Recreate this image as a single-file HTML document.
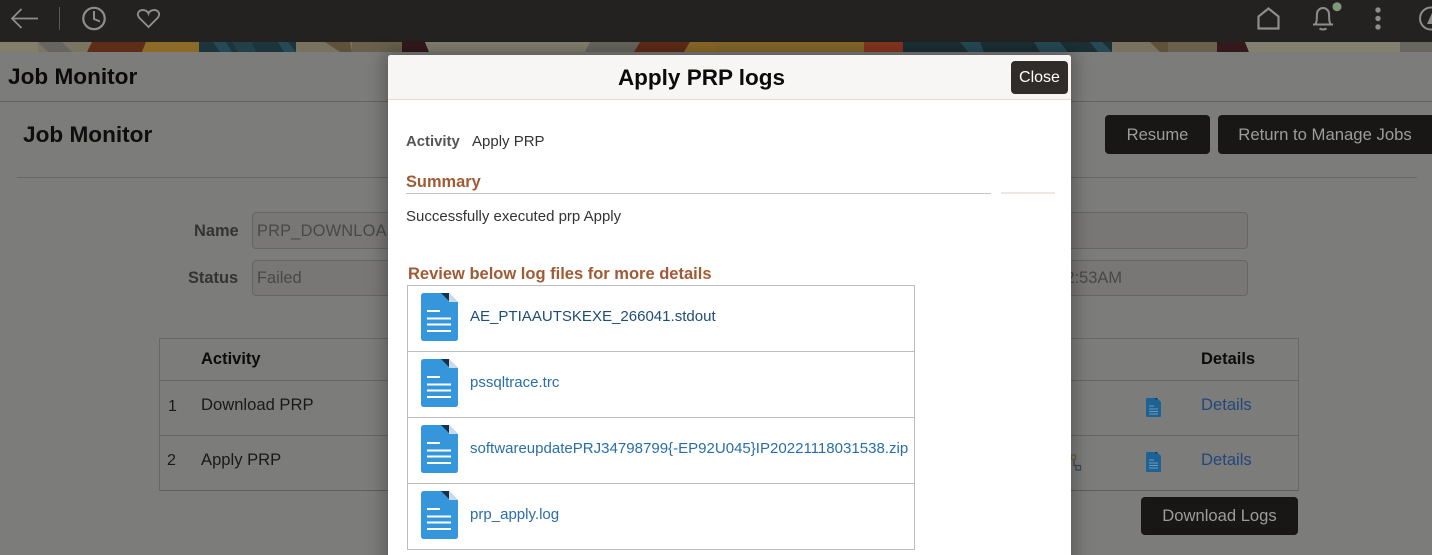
<!DOCTYPE html>
<html lang="en"><head><meta charset="utf-8"><title>Apply PRP logs</title>
<style>
html,body{margin:0;padding:0;width:1432px;height:555px;overflow:hidden;background:#7b7b7a;font-family:"Liberation Sans",sans-serif;}
#w{position:relative;width:1432px;height:555px;overflow:hidden;}
.a{position:absolute;white-space:nowrap;}
.btn{position:absolute;background:#181716;color:#9d9c9a;border-radius:4px;font-size:16.6px;text-align:center;box-sizing:border-box;}
.inp{position:absolute;box-sizing:border-box;border:1px solid #686664;border-radius:4px;background:#787776;color:#484848;font-size:16.4px;padding-left:4px;overflow:hidden;white-space:nowrap;}
.line{position:absolute;height:1px;background:#666;}
.row{position:absolute;left:407px;width:508px;height:66px;box-sizing:border-box;border:1px solid #bdbdbd;border-top:0;}
.row a{position:absolute;left:62px;top:21px;font-size:15.04px;color:#2a6ea9;white-space:nowrap;line-height:20px;}
.row svg{position:absolute;left:13px;top:7px;}
</style></head><body><div id="w">
<div class="a" style="left:0;top:0;width:1432px;height:42px;background:#232220;"></div>
<svg class="a" style="left:0;top:42px" width="1432" height="10" viewBox="0 0 1432 10">
<rect width="1432" height="10" fill="#7a7463"/>
<rect x="0" width="38" height="10" fill="#837d6b"/><polygon points="38,0 62,0 72,10 48,10" fill="#66655f"/><rect x="72" width="16" height="10" fill="#7a7463"/>
<polygon points="92,0 146,0 142,10 87,10" fill="#5f2c17"/><polygon points="146,0 199,0 199,10 142,10" fill="#8c6a28"/>
<rect x="199" width="97" height="10" fill="#1c343b"/><polygon points="213,0 226,0 232,10 220,10" fill="#264a55"/><polygon points="232,0 252,0 256,10 238,10" fill="#234049"/><polygon points="278,0 288,0 296,10 284,10" fill="#264a55"/>
<polygon points="296,0 325,0 340,10 300,10" fill="#7a7261"/><polygon points="325,0 350,0 352,10 340,10" fill="#5e523b"/>
<rect x="352" width="50" height="10" fill="#6a614d"/><polygon points="402,0 425,0 429,10 402,10" fill="#33191c"/>
<polygon points="425,0 590,0 585,10 429,10" fill="#84806f"/><polygon points="590,0 640,0 634,10 585,10" fill="#68675f"/>
<polygon points="640,0 690,0 684,10 634,10" fill="#5f2c17"/><polygon points="690,0 716,0 716,10 684,10" fill="#8c6a28"/>
<rect x="716" width="148" height="10" fill="#86682b"/><rect x="864" width="39" height="10" fill="#86351f"/><rect x="903" width="209" height="10" fill="#1b2f35"/>
<polygon points="960,0 980,0 984,10 968,10" fill="#264a55"/><polygon points="1034,0 1060,0 1068,10 1040,10" fill="#264a55"/><polygon points="1090,0 1102,0 1112,10 1098,10" fill="#264a55"/>
<polygon points="1112,0 1150,0 1168,10 1116,10" fill="#7a7261"/><polygon points="1150,0 1168,0 1172,10 1160,10" fill="#5e523b"/>
<rect x="1168" width="50" height="10" fill="#6a614d"/><polygon points="1217,0 1245,0 1249,10 1217,10" fill="#33191c"/>
<polygon points="1245,0 1400,0 1400,10 1249,10" fill="#84806f"/><rect x="1400" width="32" height="10" fill="#68675f"/>
</svg>
<div class="a" style="left:0;top:52px;width:1432px;height:503px;background:#7c7c7b;"></div>

<!-- top bar icons -->
<svg class="a" style="left:0;top:0" width="180" height="42" fill="none" stroke="#8e8d8b">
<path d="M38 18.500H12M21.500 9L12 18.500L21.500 28" stroke-width="1.800"/>
<path d="M59.500 7V30" stroke="#5a5957" stroke-width="1"/>
<circle cx="94" cy="18.500" r="10.700" stroke-width="2.200"/><path d="M94 11V19L100 21.500" stroke-width="2"/>
<path d="M148.500 27L139 17.500C136 13 139.500 10 143 10C146 10 148 12 148.500 13.500C149 12 151 10 154 10C157.500 10 161 13 158 17.500Z" stroke-width="1.900"/>
</svg>
<svg class="a" style="left:1240px;top:0" width="192" height="42" fill="none" stroke="#8e8d8b">
<path d="M18.500 28.500V16.500L28.500 8.500L38.500 16.500V28.500Z" stroke-width="2.200"/>
<path d="M73 24.500H93M75.500 24C77.500 21 76.500 17.500 77 14A6 6 0 0 1 89 14C89.500 17.500 88.500 21 90.500 24" stroke-width="2"/><path d="M79.500 28.500Q83 30.500 86.500 28.500" stroke-width="2"/>
<circle cx="97" cy="6.700" r="4.500" fill="#7f9a78" stroke="none"/>
<circle cx="138" cy="10" r="2.700" fill="#8e8d8b" stroke="none"/><circle cx="138" cy="18.500" r="2.700" fill="#8e8d8b" stroke="none"/><circle cx="138" cy="27" r="2.700" fill="#8e8d8b" stroke="none"/>
<circle cx="191" cy="18.500" r="11" stroke-width="2"/><path d="M187 24L192 13V24Z" fill="#8e8d8b" stroke="none"/>
</svg>

<!-- background page -->
<div class="a" style="left:8px;top:64px;font-size:22.6px;font-weight:bold;color:#0c0a0a;line-height:25px;">Job Monitor</div>
<div class="line" style="left:0;top:101px;width:1432px;background:#636362;"></div>
<div class="a" style="left:23px;top:121px;font-size:22.6px;font-weight:bold;color:#0e0e0e;line-height:28px;">Job Monitor</div>
<div class="line" style="left:17px;top:177px;width:1400px;background:#666;"></div>
<div class="btn" style="left:1105px;top:115px;width:105px;height:39px;line-height:40px;">Resume</div>
<div class="btn" style="left:1218px;top:115px;width:214px;height:39px;line-height:40px;border-radius:4px 0 0 4px;font-size:16.7px;">Return to Manage Jobs</div>
<div class="a" style="left:194px;top:222px;font-size:16.4px;font-weight:bold;color:#333;line-height:18px;">Name</div>
<div class="a" style="left:188px;top:269px;font-size:16.4px;font-weight:bold;color:#333;line-height:18px;">Status</div>
<div class="inp" style="left:252px;top:212px;width:996px;height:37px;line-height:36px;"><span style="letter-spacing:.2px">PRP_DOWNLOAD</span></div>
<div class="inp" style="left:252px;top:260px;width:996px;height:36px;line-height:35px;">Failed<span style="position:absolute;right:125px;top:0">11/18/2022 12:53AM</span></div>

<div class="a" style="left:159px;top:338px;width:1140px;height:153px;box-sizing:border-box;border:1px solid #686868;border-bottom:1px solid #5f5d58;"></div>
<div class="line" style="left:160px;top:380px;width:1138px;"></div>
<div class="line" style="left:160px;top:435px;width:1138px;"></div>
<div class="a" style="left:201px;top:350px;font-size:16.5px;font-weight:bold;color:#0c0c0c;line-height:18px;">Activity</div>
<div class="a" style="left:1201px;top:350px;font-size:16.5px;font-weight:bold;color:#0c0c0c;line-height:18px;">Details</div>
<div class="a" style="left:168px;top:398px;font-size:16px;color:#191919;line-height:18px;">1</div>
<div class="a" style="left:201px;top:396px;font-size:16.6px;color:#191919;line-height:18px;">Download PRP</div>
<div class="a" style="left:167px;top:452px;font-size:16px;color:#191919;line-height:18px;">2</div>
<div class="a" style="left:201px;top:451px;font-size:16.6px;color:#191919;line-height:18px;">Apply PRP</div>
<div class="a" style="left:1201px;top:396px;font-size:16.6px;color:#22477a;line-height:18px;">Details</div>
<div class="a" style="left:1201px;top:451px;font-size:16.6px;color:#22477a;line-height:18px;">Details</div>
<svg class="a" style="left:1146px;top:398px" width="15" height="19"><path d="M1 0H11L15 4V18Q15 19 14 19H1Q0 19 0 18V1Q0 0 1 0Z" fill="#1e6295"/><path d="M9 0H11V2Z" fill="#10263a"/><path d="M3 8H8M3 11H12M3 13.500H12M3 16H12" stroke="#6d99ba" stroke-width="1"/></svg>
<svg class="a" style="left:1146px;top:452px" width="15" height="20"><path d="M1 0H11L15 4V19Q15 20 14 20H1Q0 20 0 19V1Q0 0 1 0Z" fill="#1e6295"/><path d="M9 0H11V2Z" fill="#10263a"/><path d="M3 8H8M3 11H12M3 13.500H12M3 16H12" stroke="#6d99ba" stroke-width="1"/></svg>
<svg class="a" style="left:1071px;top:453px" width="12" height="18" fill="none" stroke="#4a4a48" stroke-width="1.300"><rect x="0.500" y="2" width="4" height="4.500" stroke="#6a6040"/><path d="M3 6.500V12.500H5"/><rect x="5" y="12.500" width="4.500" height="4.500" stroke="#3c4a58"/></svg>
<div class="btn" style="left:1141px;top:497px;width:157px;height:38px;line-height:38px;">Download Logs</div>

<!-- modal shadow -->
<div class="a" style="left:388px;top:55px;width:683px;height:520px;box-shadow:0 0 16px 4px rgba(0,0,0,.28);"></div>
<!-- modal -->
<div class="a" style="left:388px;top:55px;width:683px;height:500px;background:#fff;border-radius:3px 3px 0 0;overflow:hidden;">
  <div style="position:absolute;left:0;top:0;width:683px;height:44px;background:#f8f6f4;border-bottom:1px solid #dfdcd9;"></div>
  <div class="a" style="left:0;width:627px;text-align:center;top:9px;font-size:22.5px;font-weight:bold;color:#0b0b0b;line-height:27px;">Apply PRP logs</div>
  <div class="a" style="left:623px;top:6px;width:57px;height:33px;background:#302c29;color:#fff;border-radius:4px;font-size:16px;line-height:34px;text-align:center;">Close</div>
  <div class="a" style="left:18px;top:78px;font-size:14.9px;font-weight:bold;color:#555;line-height:18px;">Activity</div>
  <div class="a" style="left:84px;top:78px;font-size:15px;color:#333;line-height:18px;">Apply PRP</div>
  <div class="a" style="left:18px;top:118px;font-size:16.4px;font-weight:bold;color:#a25a34;line-height:18px;">Summary</div>
  <div class="a" style="left:18px;top:138px;width:585px;height:1px;background:#c4c4c4;"></div>
  <div class="a" style="left:613px;top:137px;width:54px;height:2px;background:#ece9e5;"></div>
  <div class="a" style="left:18px;top:153px;font-size:15px;color:#333;line-height:18px;">Successfully executed prp Apply</div>
  <div class="a" style="left:20px;top:210px;font-size:16.5px;font-weight:bold;color:#a25a34;line-height:18px;">Review below log files for more details</div>
</div>
<div class="a" style="left:407px;top:285px;width:508px;height:1px;background:#bdbdbd;"></div>
<div class="row" style="top:286px;"><svg width="37" height="48" viewBox="0 0 37 48"><path d="M3 0H28L37 9V45Q37 48 34 48H3Q0 48 0 45V3Q0 0 3 0Z" fill="#3596db"/><path d="M28 0L37 9H28Z" fill="#c9d9e6"/><path d="M20 0H28V8Z" fill="#13304d"/><path d="M6 18H19M6 25.500H30M6 31.500H30M6 38H30" stroke="#fff" stroke-width="2"/></svg><a style="color:#1f4d78;">AE_PTIAAUTSKEXE_266041.stdout</a></div>
<div class="row" style="top:352px;"><svg width="37" height="48" viewBox="0 0 37 48"><path d="M3 0H28L37 9V45Q37 48 34 48H3Q0 48 0 45V3Q0 0 3 0Z" fill="#3596db"/><path d="M28 0L37 9H28Z" fill="#c9d9e6"/><path d="M20 0H28V8Z" fill="#13304d"/><path d="M6 18H19M6 25.500H30M6 31.500H30M6 38H30" stroke="#fff" stroke-width="2"/></svg><a>pssqltrace.trc</a></div>
<div class="row" style="top:418px;"><svg width="37" height="48" viewBox="0 0 37 48"><path d="M3 0H28L37 9V45Q37 48 34 48H3Q0 48 0 45V3Q0 0 3 0Z" fill="#3596db"/><path d="M28 0L37 9H28Z" fill="#c9d9e6"/><path d="M20 0H28V8Z" fill="#13304d"/><path d="M6 18H19M6 25.500H30M6 31.500H30M6 38H30" stroke="#fff" stroke-width="2"/></svg><a>softwareupdatePRJ34798799{-EP92U045}IP20221118031538.zip</a></div>
<div class="row" style="top:484px;"><svg width="37" height="48" viewBox="0 0 37 48"><path d="M3 0H28L37 9V45Q37 48 34 48H3Q0 48 0 45V3Q0 0 3 0Z" fill="#3596db"/><path d="M28 0L37 9H28Z" fill="#c9d9e6"/><path d="M20 0H28V8Z" fill="#13304d"/><path d="M6 18H19M6 25.500H30M6 31.500H30M6 38H30" stroke="#fff" stroke-width="2"/></svg><a>prp_apply.log</a></div>
</div></body></html>
